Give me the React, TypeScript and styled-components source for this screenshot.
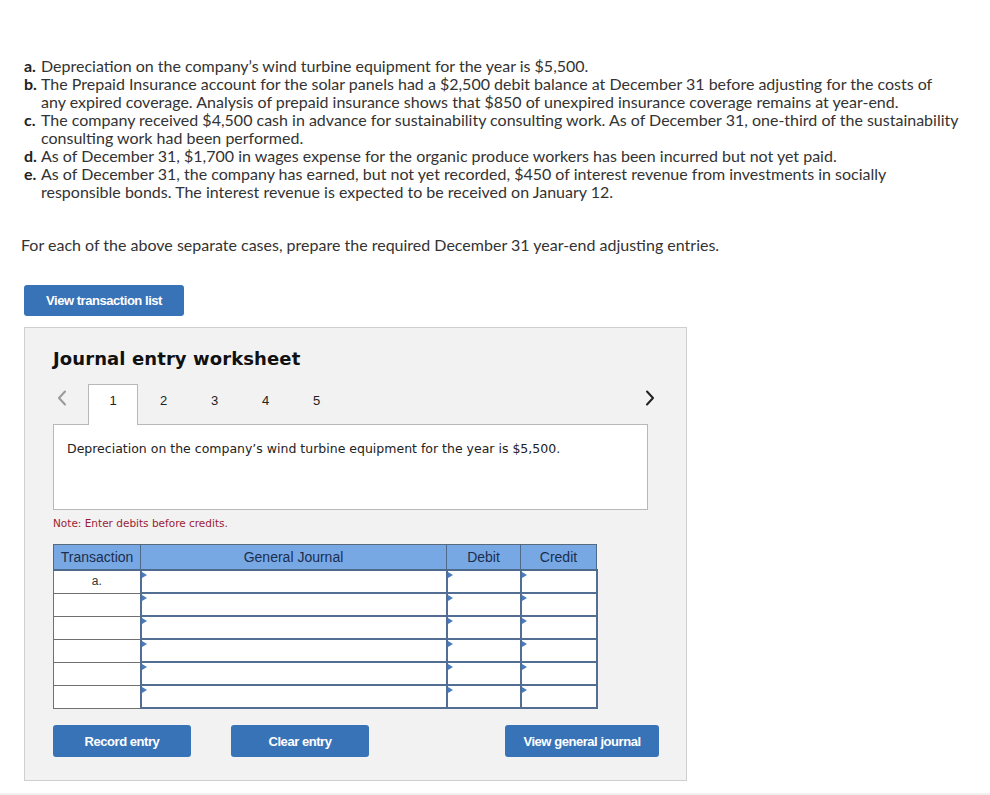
import styled, { createGlobalStyle } from "styled-components";

const GlobalStyle = createGlobalStyle`
  html, body {
    margin: 0;
    padding: 0;
    background: #ffffff;
  }
  body {
    font-family: Lato, "Liberation Sans", sans-serif;
    color: #333;
  }
`;

const Page = styled.div`
  width: 990px;
  height: 795px;
  box-sizing: border-box;
  padding: 57px 0 0 24px;
  overflow: hidden;
  border-bottom: 2px solid #f0f0f0;
`;

const CaseList = styled.div`
  font-size: 16px;
  line-height: 18px;
  color: #333;
`;

const CaseItem = styled.div`
  display: flex;
`;

const CaseLabel = styled.span`
  width: 17px;
  flex: none;
  font-weight: bold;
  color: #222;
`;

const CaseLine = styled.span`
  display: block;
  white-space: nowrap;
`;

const Instruction = styled.p`
  margin: 35px 0 0 -3px;
  font-size: 16px;
  line-height: 18px;
  color: #333;
`;

const BlueButton = styled.button<{ $w: number }>`
  width: ${(p) => p.$w}px;
  height: 32px;
  border: none;
  border-radius: 3px;
  background: #3873b8;
  color: #fff;
  font-family: "Liberation Sans", Arial, sans-serif;
  font-weight: bold;
  font-size: 13px;
  letter-spacing: -0.45px;
  padding: 0;
  cursor: pointer;
`;

const TopButton = styled(BlueButton)`
  margin-top: 31px;
  height: 31px;
`;

const Worksheet = styled.div`
  margin-top: 11px;
  width: 663px;
  height: 454px;
  box-sizing: border-box;
  background: #f2f2f2;
  border: 1px solid #cfcfcf;
  padding: 19px 38px 0 28px;
`;

const Title = styled.h2`
  margin: 0;
  font-family: "DejaVu Sans", Verdana, sans-serif;
  font-weight: bold;
  font-size: 18px;
  line-height: 24px;
  color: #111;
  letter-spacing: 0.1px;
`;

const TabRow = styled.div`
  margin: 13px -19px 0 0;
  display: flex;
  align-items: flex-end;
  height: 41px;
  position: relative;
  z-index: 1;
`;

const Chevron = styled.span<{ $dark?: boolean }>`
  display: flex;
  align-items: center;
  justify-content: ${(p) => (p.$dark ? "center" : "flex-start")};
  padding-left: ${(p) => (p.$dark ? 0 : 4)}px;
  box-sizing: border-box;
  width: 35px;
  height: 28px;
  align-self: flex-start;
  color: ${(p) => (p.$dark ? "#222" : "#9a9a9a")};
`;

const Tab = styled.div<{ $active?: boolean }>`
  width: ${(p) => (p.$active ? 50 : 51)}px;
  height: 41px;
  box-sizing: border-box;
  display: flex;
  justify-content: center;
  padding-top: 8px;
  font-family: "Liberation Sans", Arial, sans-serif;
  font-size: 13px;
  color: #222;
  background: ${(p) => (p.$active ? "#fff" : "transparent")};
  border: 1px solid ${(p) => (p.$active ? "#b8b8b8" : "transparent")};
  border-bottom: none;
`;

const TabSpacer = styled.div`
  flex: 1;
`;

const Description = styled.div`
  margin-top: -1px;
  height: 86px;
  box-sizing: border-box;
  background: #fff;
  border: 1px solid #b8b8b8;
  padding: 16px 13px;
  font-family: "DejaVu Sans", Verdana, sans-serif;
  font-size: 12.5px;
  color: #222;
`;

const Note = styled.div`
  margin-top: 7px;
  font-family: "DejaVu Sans", Verdana, sans-serif;
  font-size: 10.5px;
  color: #9b1c34;
`;

const JournalTable = styled.table`
  margin-top: 15px;
  width: 539px;
  border-collapse: collapse;
  font-family: "Liberation Sans", Arial, sans-serif;
  font-size: 14px;
  table-layout: fixed;
`;

const HeadCell = styled.th<{ $w: number }>`
  width: ${(p) => p.$w}px;
  height: 24px;
  padding: 0;
  background: #78a8e4;
  color: #1b2e4e;
  font-weight: normal;
  border-top: 1px solid #5a6a7e;
  border-left: 1px solid #4d6a8d;
  border-right: 1px solid #4d6a8d;
  border-bottom: 2px solid #4d6a8d;
`;

const TxCell = styled.td`
  height: 21px;
  padding: 0;
  background: #fff;
  border: 1px solid #707070;
  text-align: center;
  vertical-align: top;
  font-size: 12px;
  color: #333;
  line-height: 20px;
`;

const InputCell = styled.td`
  position: relative;
  height: 21px;
  padding: 0;
  background: #fff;
  border: 2px solid #526f93;

  &::before {
    content: "";
    position: absolute;
    left: 0;
    top: 1px;
    border-top: 3.5px solid transparent;
    border-bottom: 3.5px solid transparent;
    border-left: 5px solid #4a7bbd;
  }
`;

const ActionRow = styled.div`
  margin: 16px -11px 0 0;
  display: flex;
  gap: 40px;
`;

const ActionSpacer = styled.div`
  flex: 1;
`;

const Arrow = ({ dir }: { dir: "left" | "right" }) => (
  <svg width="10" height="16" viewBox="0 0 10 16" fill="none">
    <path
      d={dir === "left" ? "M8 1.5 L2 8 L8 14.5" : "M2 1.5 L8 8 L2 14.5"}
      stroke="currentColor"
      strokeWidth="2"
      strokeLinecap="round"
      strokeLinejoin="round"
    />
  </svg>
);

const cases = [
  { label: "a.", lines: ["Depreciation on the company’s wind turbine equipment for the year is $5,500."] },
  {
    label: "b.",
    lines: [
      "The Prepaid Insurance account for the solar panels had a $2,500 debit balance at December 31 before adjusting for the costs of",
      "any expired coverage. Analysis of prepaid insurance shows that $850 of unexpired insurance coverage remains at year-end.",
    ],
  },
  {
    label: "c.",
    lines: [
      "The company received $4,500 cash in advance for sustainability consulting work. As of December 31, one-third of the sustainability",
      "consulting work had been performed.",
    ],
  },
  { label: "d.", lines: ["As of December 31, $1,700 in wages expense for the organic produce workers has been incurred but not yet paid."] },
  {
    label: "e.",
    lines: [
      "As of December 31, the company has earned, but not yet recorded, $450 of interest revenue from investments in socially",
      "responsible bonds. The interest revenue is expected to be received on January 12.",
    ],
  },
];

const rows = ["a.", "", "", "", "", ""];

export default function App() {
  return (
    <>
      <GlobalStyle />
      <Page>
        <CaseList>
          {cases.map((c) => (
            <CaseItem key={c.label}>
              <CaseLabel>{c.label}</CaseLabel>
              <div>
                {c.lines.map((l) => (
                  <CaseLine key={l}>{l}</CaseLine>
                ))}
              </div>
            </CaseItem>
          ))}
        </CaseList>

        <Instruction>
          For each of the above separate cases, prepare the required December 31 year-end adjusting entries.
        </Instruction>

        <TopButton $w={160}>View transaction list</TopButton>

        <Worksheet>
          <Title>Journal entry worksheet</Title>

          <TabRow>
            <Chevron>
              <Arrow dir="left" />
            </Chevron>
            <Tab $active>1</Tab>
            <Tab>2</Tab>
            <Tab>3</Tab>
            <Tab>4</Tab>
            <Tab>5</Tab>
            <TabSpacer />
            <Chevron $dark>
              <Arrow dir="right" />
            </Chevron>
          </TabRow>

          <Description>Depreciation on the company’s wind turbine equipment for the year is $5,500.</Description>

          <Note>Note: Enter debits before credits.</Note>

          <JournalTable>
            <thead>
              <tr>
                <HeadCell $w={86}>Transaction</HeadCell>
                <HeadCell $w={305}>General Journal</HeadCell>
                <HeadCell $w={73}>Debit</HeadCell>
                <HeadCell $w={75}>Credit</HeadCell>
              </tr>
            </thead>
            <tbody>
              {rows.map((r, i) => (
                <tr key={i}>
                  <TxCell>{r}</TxCell>
                  <InputCell />
                  <InputCell />
                  <InputCell />
                </tr>
              ))}
            </tbody>
          </JournalTable>

          <ActionRow>
            <BlueButton $w={138}>Record entry</BlueButton>
            <BlueButton $w={138}>Clear entry</BlueButton>
            <ActionSpacer />
            <BlueButton $w={154}>View general journal</BlueButton>
          </ActionRow>
        </Worksheet>
      </Page>
    </>
  );
}
